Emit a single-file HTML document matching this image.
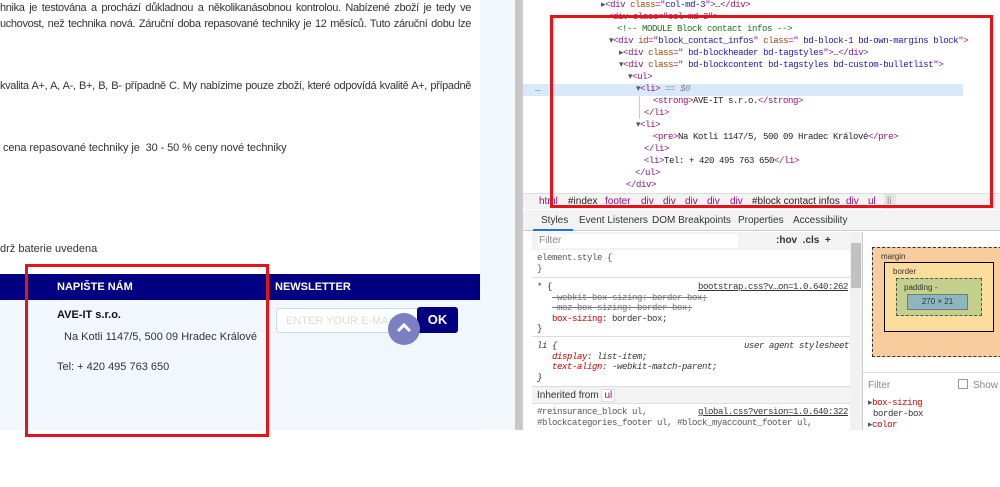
<!DOCTYPE html>
<html><head><meta charset="utf-8"><style>
*{box-sizing:border-box;margin:0;padding:0}
body{width:1000px;height:487px;overflow:hidden;background:#fff;font-family:"Liberation Sans",sans-serif;position:relative}
.a{position:absolute;white-space:nowrap}
.t{font-size:11px;color:#333}
.j{text-align:justify;text-align-last:justify;width:471px;left:0;white-space:normal;height:15px;overflow:hidden;letter-spacing:-0.35px}
.m{font-family:"Liberation Mono",monospace;font-size:9px;letter-spacing:-0.4px;white-space:pre;position:absolute;color:#222}
.tg{color:#881280}.at{color:#994500}.av{color:#1a1aa6}.cm{color:#236e25}
.pr{color:#c80000}.ar{color:#555}
</style></head><body>
<div class="a" style="left:480px;top:0;width:35px;height:430px;background:#f3f8fd"></div>
<div class="a" style="left:515px;top:0;width:7px;height:430px;background:#c8c8c8"></div>
<div class="a t j" style="top:2px">hnika je testována a prochází důkladnou a několikanásobnou kontrolou. Nabízené zboží je tedy ve</div>
<div class="a t j" style="top:18px">uchovost, než technika nová. Záruční doba repasované techniky je 12 měsíců. Tuto záruční dobu lze</div>
<div class="a t j" style="top:80px">kvalita A+, A, A-, B+, B, B- případně C. My nabízime pouze zboží, které odpovídá kvalitě A+, případně</div>
<div class="a t" style="left:3px;top:142px;letter-spacing:-0.1px">cena repasované techniky je&nbsp; 30 - 50 % ceny nové techniky</div>
<div class="a t" style="left:0;top:243px">drž baterie uvedena</div>
<div class="a" style="left:0;top:300px;width:480px;height:130px;background:#f1f7fd"></div>
<div class="a" style="left:0;top:274px;width:480px;height:26px;background:#000080"></div>
<div class="a" style="left:57px;top:281px;color:#fff;font-weight:bold;font-size:11px">NAPIŠTE NÁM</div>
<div class="a" style="left:275px;top:281px;color:#fff;font-weight:bold;font-size:11px">NEWSLETTER</div>
<div class="a" style="left:57px;top:309px;font-weight:bold;font-size:11px;color:#111">AVE-IT s.r.o.</div>
<div class="a t" style="left:64px;top:331px">Na Kotli 1147/5, 500 09 Hradec Králové</div>
<div class="a t" style="left:57px;top:361px">Tel: + 420 495 763 650</div>
<div class="a" style="left:276px;top:308px;width:148px;height:25px;border:1px solid #bfe0f5;border-radius:3px 0 0 3px;background:#fff;font-size:11px;color:#ddd;padding:6px 0 0 9px">ENTER YOUR E-MAIL</div>
<div class="a" style="left:417px;top:307px;width:41px;height:26px;background:#000080;border-radius:3px;color:#fff;font-weight:bold;font-size:13px;text-align:center;line-height:25px">OK</div>
<div class="a" style="left:388px;top:313px;width:32px;height:32px;border-radius:50%;background:#7b7fc4"></div>
<svg class="a" style="left:396px;top:320px" width="16" height="14"><path d="M2 11 L8 5 L14 11" stroke="#fff" stroke-width="3" fill="none"/></svg>
<div class="a" style="left:25px;top:264px;width:244px;height:173px;border:3px solid #e5141b"></div>
<!-- devtools -->
<div class="a" style="left:522px;top:0;width:478px;height:430px;background:#fff;border-left:1px solid #ccc"></div>
<div class="a" style="left:523px;top:84px;width:440px;height:12px;background:#d7e9fa"></div>
<div class="m" style="left:535px;top:84px;color:#555">…</div>
<div class="a" style="left:639px;top:96px;width:1px;height:23px;background:#bcd"></div>
<div class="m" style="left:601px;top:0px"><span class="ar">▸</span><span class="tg">&lt;div </span><span class="at">class</span><span class="tg">="</span><span class="av">col-md-3</span><span class="tg">"&gt;</span>…<span class="tg">&lt;/div&gt;</span></div>
<div class="m" style="left:608px;top:12px;color:#881280">&lt;div class="col-md-3"&gt;</div>
<div class="m" style="left:617px;top:24px"><span class="cm">&lt;!-- MODULE Block contact infos --&gt;</span></div>
<div class="m" style="left:609px;top:36px"><span class="ar">▾</span><span class="tg">&lt;div </span><span class="at">id</span><span class="tg">="</span><span class="av">block_contact_infos</span><span class="tg">" </span><span class="at">class</span><span class="tg">="</span><span class="av"> bd-block-1 bd-own-margins block</span><span class="tg">"&gt;</span></div>
<div class="m" style="left:619px;top:48px"><span class="ar">▸</span><span class="tg">&lt;div </span><span class="at">class</span><span class="tg">="</span><span class="av"> bd-blockheader bd-tagstyles</span><span class="tg">"&gt;</span>…<span class="tg">&lt;/div&gt;</span></div>
<div class="m" style="left:619px;top:60px"><span class="ar">▾</span><span class="tg">&lt;div </span><span class="at">class</span><span class="tg">="</span><span class="av"> bd-blockcontent bd-tagstyles bd-custom-bulletlist</span><span class="tg">"&gt;</span></div>
<div class="m" style="left:628px;top:72px"><span class="ar">▾</span><span class="tg">&lt;ul&gt;</span></div>
<div class="m" style="left:636px;top:84px"><span class="ar">▾</span><span class="tg">&lt;li&gt;</span> <span style="color:#888;font-style:italic">== $0</span></div>
<div class="m" style="left:653px;top:96px"><span class="tg">&lt;strong&gt;</span>AVE-IT s.r.o.<span class="tg">&lt;/strong&gt;</span></div>
<div class="m" style="left:644px;top:108px"><span class="tg">&lt;/li&gt;</span></div>
<div class="m" style="left:636px;top:120px"><span class="ar">▾</span><span class="tg">&lt;li&gt;</span></div>
<div class="m" style="left:653px;top:132px"><span class="tg">&lt;pre&gt;</span>Na Kotli 1147/5, 500 09 Hradec Králové<span class="tg">&lt;/pre&gt;</span></div>
<div class="m" style="left:644px;top:144px"><span class="tg">&lt;/li&gt;</span></div>
<div class="m" style="left:644px;top:156px"><span class="tg">&lt;li&gt;</span>Tel: + 420 495 763 650<span class="tg">&lt;/li&gt;</span></div>
<div class="m" style="left:635px;top:168px"><span class="tg">&lt;/ul&gt;</span></div>
<div class="m" style="left:626px;top:180px"><span class="tg">&lt;/div&gt;</span></div>
<div class="a" style="left:523px;top:193px;width:477px;height:16px;background:#f3f3f3;border-top:1px solid #ddd"></div>
<div class="a" style="left:539px;top:196px;font-size:10px;color:#881280">html</div>
<div class="a" style="left:568px;top:196px;font-size:10px;color:#222">#index</div>
<div class="a" style="left:605px;top:196px;font-size:10px;color:#881280">footer</div>
<div class="a" style="left:641px;top:196px;font-size:10px;color:#881280">div</div>
<div class="a" style="left:663px;top:196px;font-size:10px;color:#881280">div</div>
<div class="a" style="left:685px;top:196px;font-size:10px;color:#881280">div</div>
<div class="a" style="left:707px;top:196px;font-size:10px;color:#881280">div</div>
<div class="a" style="left:730px;top:196px;font-size:10px;color:#881280">div</div>
<div class="a" style="left:752px;top:196px;font-size:10px;color:#222">#block contact infos</div>
<div class="a" style="left:846px;top:196px;font-size:10px;color:#881280">div</div>
<div class="a" style="left:868px;top:196px;font-size:10px;color:#881280">ul</div>
<div class="a" style="left:884px;top:194px;width:12px;height:15px;background:#e4e4e4;font-size:10px;color:#888;padding:2px 0 0 3px">li</div>
<div class="a" style="left:523px;top:210px;width:477px;height:21px;background:#f3f3f3;border-bottom:1px solid #ccc"></div>
<div class="a" style="left:541px;top:215px;font-size:10px;color:#333">Styles</div>
<div class="a" style="left:533px;top:229px;width:40px;height:2px;background:#1a73e8"></div>
<div class="a" style="left:579px;top:215px;font-size:10px;color:#333">Event Listeners</div>
<div class="a" style="left:652px;top:215px;font-size:10px;color:#333">DOM Breakpoints</div>
<div class="a" style="left:738px;top:215px;font-size:10px;color:#333">Properties</div>
<div class="a" style="left:793px;top:215px;font-size:10px;color:#333">Accessibility</div>
<div class="a" style="left:532px;top:232px;width:318px;height:18px;background:#f3f3f3"></div>
<div class="a" style="left:538px;top:234px;width:200px;height:14px;background:#fff"></div>
<div class="a" style="left:539px;top:235px;font-size:10px;color:#888">Filter</div>
<div class="a" style="left:776px;top:235px;font-size:10px;color:#333;font-weight:bold">:hov &nbsp;.cls &nbsp;+</div>
<div class="m" style="left:537px;top:253px;line-height:10.5px;color:#555">element.style {
}</div>
<div class="a" style="left:532px;top:277px;width:318px;height:1px;background:#ddd"></div>
<div class="m" style="left:537px;top:282px;line-height:10.5px;color:#333">* {
   <s style="color:#777">-webkit-box-sizing: border-box;</s>
   <s style="color:#777">-moz-box-sizing: border-box;</s>
   <span class="pr">box-sizing</span>: border-box;
}</div>
<div class="m" style="left:698px;top:282px;color:#333;text-decoration:underline">bootstrap.css?v…on=1.0.640:262</div>
<div class="a" style="left:532px;top:336px;width:318px;height:1px;background:#ddd"></div>
<div class="m" style="left:537px;top:341px;line-height:10.5px;color:#333;font-style:italic">li {
   <span class="pr">display</span>: list-item;
   <span class="pr">text-align</span>: -webkit-match-parent;
}</div>
<div class="m" style="left:744px;top:341px;color:#333;font-style:italic">user agent stylesheet</div>
<div class="a" style="left:532px;top:386px;width:318px;height:18px;background:#f3f3f3;border-top:1px solid #ddd;border-bottom:1px solid #ddd"></div>
<div class="a" style="left:537px;top:390px;font-size:10px;color:#333">Inherited from <span style="border:1px solid #ddd;background:#fff;color:#881280;padding:0 2px">ul</span></div>
<div class="m" style="left:537px;top:407px;line-height:10.5px;color:#555">#reinsurance_block ul,
#blockcategories_footer ul, #block_myaccount_footer ul,</div>
<div class="m" style="left:698px;top:407px;color:#333;text-decoration:underline">global.css?version=1.0.640:322</div>
<div class="a" style="left:850px;top:232px;width:12px;height:198px;background:#f1f1f1"></div>
<div class="a" style="left:851px;top:243px;width:10px;height:45px;background:#c1c1c1"></div>
<div class="a" style="left:862px;top:232px;width:1px;height:198px;background:#ccc"></div>
<div class="a" style="left:872px;top:247px;width:140px;height:110px;background:#f9cc9d;border:1px dashed #333"></div>
<div class="a" style="left:881px;top:252px;font-size:8px;color:#333">margin</div>
<div class="a" style="left:884px;top:262px;width:110px;height:70px;background:#fddd9b;border:1px solid #000"></div>
<div class="a" style="left:893px;top:267px;font-size:8px;color:#333">border</div>
<div class="a" style="left:896px;top:278px;width:86px;height:38px;background:#c3d08b;border:1px dashed #555"></div>
<div class="a" style="left:904px;top:283px;font-size:8px;color:#333">padding -</div>
<div class="a" style="left:907px;top:294px;width:61px;height:16px;background:#8cb6c0;border:1px solid #777;font-size:8px;text-align:center;line-height:14px;color:#333">270 × 21</div>
<div class="a" style="left:863px;top:372px;width:137px;height:1px;background:#ddd"></div>
<div class="a" style="left:868px;top:380px;font-size:10px;color:#888">Filter</div>
<div class="a" style="left:958px;top:379px;width:10px;height:10px;border:1px solid #999;background:#fff"></div>
<div class="a" style="left:973px;top:380px;font-size:10px;color:#888">Show a</div>
<div class="m" style="left:868px;top:398px;line-height:11px;color:#333"><span class="ar">▸</span><span class="pr">box-sizing</span>
 border-box
<span class="ar">▸</span><span class="pr">color</span></div>
<div class="a" style="left:550px;top:15px;width:443px;height:193px;border:3px solid #e5141b"></div>
</body></html>
